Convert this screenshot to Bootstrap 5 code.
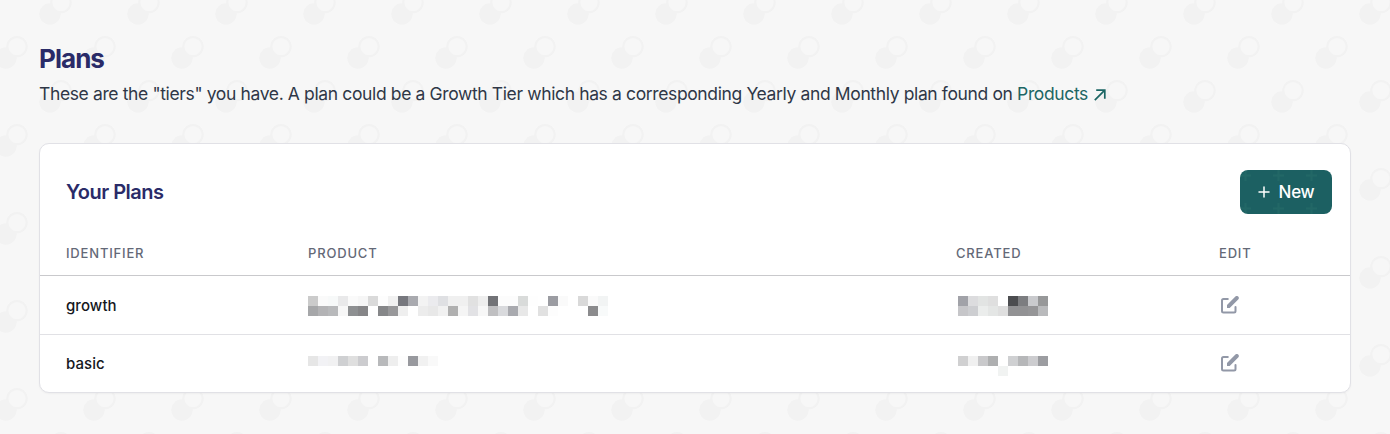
<!DOCTYPE html>
<html lang="en">
<head>
<meta charset="utf-8">
<meta name="viewport" content="width=device-width, initial-scale=1">
<title>Plans</title>
<link href="https://cdn.jsdelivr.net/npm/bootstrap@5.3.0/dist/css/bootstrap.min.css" rel="stylesheet">
<style>
  body { font-family: Inter, "Liberation Sans", sans-serif; color: #2f3747; min-height: 434px;
    background: #f7f7f7 url("data:image/svg+xml,%3Csvg xmlns='http://www.w3.org/2000/svg' width='88' height='88'%3E%3Cg fill='%23f2f2f2'%3E%3Ccircle cx='50' cy='14' r='10.7'/%3E%3Ccircle cx='6' cy='58' r='10.7'/%3E%3Ccircle cx='94' cy='58' r='10.7'/%3E%3C/g%3E%3Cg fill='%23f7f7f7' stroke='%23f2f2f2' stroke-width='2'%3E%3Ccircle cx='61' cy='2.6' r='9.7'/%3E%3Ccircle cx='61' cy='90.6' r='9.7'/%3E%3Ccircle cx='17' cy='46.6' r='9.7'/%3E%3C/g%3E%3C/svg%3E"); }
  .page { padding: 43px 39px 0; }
  .page-title { font-size: 26px; line-height: 32px; font-weight: 700; letter-spacing: -.95px; color: #2a2b68; margin: 0 0 7px; }
  .intro { font-size: 17.5px; line-height: 24px; letter-spacing: -.37px; margin-bottom: 37px; white-space: nowrap; }
  .intro a { color: #1c6664; }
  .intro svg { margin-left: 1px; vertical-align: -1px; }
  .plans-card { border: 1px solid #e1e1e6; border-radius: 10px; height: 250px; overflow: hidden; box-shadow: 0 1px 2px #0000000a; }
  .plans-head { height: 88px; padding: 8px 18px 0 26px; }
  .plans-head h2 { font-size: 20px; line-height: 28px; font-weight: 600; letter-spacing: -.5px; color: #2a2b68; }
  .btn-new { width: 92px; height: 44px; border-radius: 8px; color: #fff; font-size: 17px; font-weight: 500; letter-spacing: -.3px; gap: 9px; border: 0;
    background: #1c6062 url("data:image/svg+xml,%3Csvg xmlns='http://www.w3.org/2000/svg' width='33' height='33'%3E%3Cpath d='M0 5.5h11M5.5 0v11' stroke='%23226766' stroke-width='2'/%3E%3C/svg%3E"); }
  .btn-new span { position: relative; top: 1px; }
  .btn-new:hover { color: #fff; }
  .plans-table { table-layout: fixed; color: #15171d; }
  .plans-table th, .plans-table td { padding: 0; border: 0; background: transparent; vertical-align: top; }
  .plans-table th:first-child, .plans-table td:first-child { padding-left: 26px; }
  .plans-table th { height: 44px; padding-top: 12px; font-size: 13px; line-height: 20px; font-weight: 500; letter-spacing: .82px; color: #646977; }
  .plans-table thead tr { border-bottom: 1px solid #c9c9cc; }
  .plans-table tbody td { height: 58px; padding-top: 20px; font-size: 15px; line-height: 20px; font-weight: 500; letter-spacing: .08px; }
  .plans-table tbody tr:first-child { border-bottom: 1px solid #e1e1e5; }
  .plans-table tbody tr:first-child td { height: 59px; }
  .plans-table tbody tr + tr td { padding-top: 19px; }
  .mosaic { display: grid; grid-auto-rows: 10px; justify-content: start; }
  .mosaic-date { margin-left: 2px; }
  .plans-table tbody tr + tr .mosaic { margin-top: 2px; }
</style>
</head>
<body>
<main class="page">
  <h1 class="page-title">Plans</h1>
  <p class="intro">These are the "tiers" you have. A plan could be a Growth Tier which has a corresponding Yearly and Monthly plan found on <a href="#" class="text-decoration-none">Products <svg width="12" height="12" viewBox="0 0 12 12" fill="none" stroke="currentColor" stroke-width="1.7"><path d="M.8 11.2 10.8 1.200M2.200 1.200h8.600v8.600"/></svg></a></p>
  <section class="card plans-card">
    <div class="plans-head d-flex align-items-center justify-content-between">
      <h2 class="m-0">Your Plans</h2>
      <button type="button" class="btn btn-new d-flex align-items-center justify-content-center p-0">
        <svg width="12" height="12" viewBox="0 0 12 12" stroke="currentColor" stroke-width="1.5" stroke-linecap="round"><path d="M1 6h10M6 1v10"/></svg><span>New</span>
      </button>
    </div>
    <table class="table plans-table m-0">
      <colgroup><col style="width:268px"><col style="width:648px"><col style="width:263px"><col></colgroup>
      <thead><tr><th>IDENTIFIER</th><th>PRODUCT</th><th>CREATED</th><th>EDIT</th></tr></thead>
      <tbody>
        <tr><td>growth</td><td><div class="mosaic" data-cols="30" data-cells="cbcbcb fafafa f7f9f9 e9e9ea fafafa f6f6f6 dadada fdfdfd f1f1f1 77787e a9aaaf f3f3f3 ebebee dfe0e3 f0f0f0 f0f0f0 e1e1e1 eeeeee 727377 fcfcfc fcfcfc d9dbda fefefe ffffff 9b9ca2 fafafa ffffff d9d9d9 fafafa f2f4f4 a6a7a9 b3b3b5 b8b9bb f7f7f7 8e9092 868688 ffffff 868789 98989a efefef ffffff ececec e8e8e8 f1f1f1 b0b0b0 f5f5f5 e2e2e5 f7f7f7 bfbfc1 d9dadd a9aaaf e8e8e8 ffffff e1e1e1 fdfdfd ffffff ffffff ffffff 8b8b8d f8fafa"></div></td>
          <td><div class="mosaic mosaic-date" data-cols="9" data-cells="a1a2a8 dcdcde e2e4e3 dfdfdf ffffff 4c4d50 7c7d80 c9cacd 979899 c6c6c9 cdced1 ebedec e4e6e5 dfdfdf 929294 929294 959597 b9babc"></div></td>
          <td class="edit-cell"></td></tr>
        <tr><td>basic</td><td><div class="mosaic" data-cols="13" data-cells="e6e6e6 f2f2f5 f1f1f2 cfd0d2 dfdfdf cccccf ffffff b8b9bb eeeeee fdfdfd 98999e f1f1f1 f9f9f9"></div></td>
          <td><div class="mosaic mosaic-date" data-cols="9" data-cells="d0d0d1 f0f0f0 c9c9cb aeafb0 ffffff cfd0d2 b6b7b9 cccccf 9c9da1 ffffff ffffff ffffff ffffff f1f3f2"></div></td>
          <td class="edit-cell"></td></tr>
      </tbody>
    </table>
  </section>
</main>
<script src="https://cdn.jsdelivr.net/npm/bootstrap@5.3.0/dist/js/bootstrap.bundle.min.js"></script>
<script>
  // Redacted values are drawn as rows of ten-pixel cells.
  document.querySelectorAll('.mosaic').forEach(function (m) {
    m.style.gridTemplateColumns = 'repeat(' + m.dataset.cols + ', 10px)';
    m.innerHTML = m.dataset.cells.split(' ').map(function (c) { return '<i style="background:#' + c + '"></i>'; }).join('');
  });
  document.querySelectorAll('.edit-cell').forEach(function (c) {
    c.innerHTML = '<svg class="d-block" width="22" height="20" viewBox="0 0 22 20" fill="none" stroke="#9298a7" stroke-linecap="round" stroke-linejoin="round"><path stroke-width="2" d="M8.800 3H4.500Q3 3 3 4.500v10.500Q3 16.500 4.500 16.500h10.500q1.500 0 1.500-1.500V11"/><path fill="#9298a7" stroke="none" d="M8 12V9L16.400.6A1.950 1.950 0 0 1 19.200 3.400L10.700 12Z"/></svg>';
  });
</script>
</body>
</html>
